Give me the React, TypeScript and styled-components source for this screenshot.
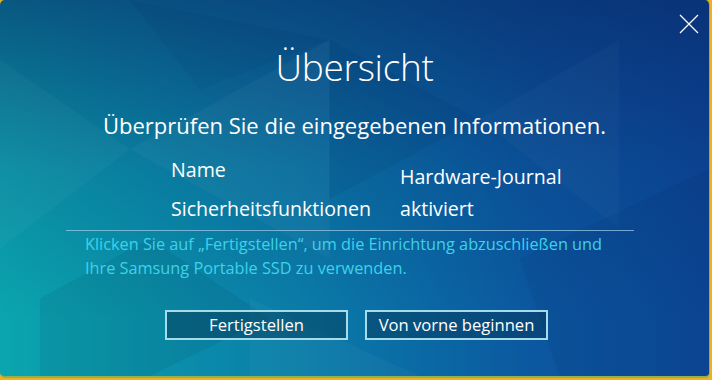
import styled, { createGlobalStyle } from "styled-components";

const GlobalStyle = createGlobalStyle`
  html, body {
    margin: 0;
    padding: 0;
    background: #f0b020;
  }
  body {
    font-family: "Open Sans", "Noto Sans", sans-serif;
  }
`;

const Pattern = () => (
  <StPattern viewBox="0 0 710 378" preserveAspectRatio="none">
    <polygon points="0,60 130,150 0,250" fill="#ffffff" opacity="0.03" />
    <polygon points="130,150 330,40 330,260" fill="#ffffff" opacity="0.035" />
    <polygon points="40,300 150,240 270,320 150,378 40,378" fill="#003040" opacity="0.09" />
    <polygon points="330,40 480,120 330,200" fill="#000830" opacity="0.05" />
    <polygon points="480,120 620,40 620,230" fill="#ffffff" opacity="0.025" />
    <polygon points="250,300 420,378 250,378" fill="#ffffff" opacity="0.03" />
    <polygon points="520,260 710,170 710,378 560,378" fill="#000830" opacity="0.05" />
    <polygon points="130,0 330,40 200,90" fill="#000830" opacity="0.04" />
  </StPattern>
);

const CloseIcon = () => (
  <svg width="20" height="20" viewBox="0 0 20 20">
    <path d="M1 1 L19 19 M19 1 L1 19" stroke="#ffffff" strokeWidth="1.2" />
  </svg>
);

export default function App() {
  return (
    <>
      <GlobalStyle />
      <StWindow>
        <Pattern />
        <StClose aria-label="Schließen">
          <CloseIcon />
        </StClose>
        <StContent>
          <StTitle>Übersicht</StTitle>
          <StSubtitle>Überprüfen Sie die eingegebenen Informationen.</StSubtitle>
          <StInfoGrid>
            <StLabel>Name</StLabel>
            <StValue $shift>Hardware-Journal</StValue>
            <StLabel>Sicherheitsfunktionen</StLabel>
            <StValue>aktiviert</StValue>
          </StInfoGrid>
          <StDivider />
          <StNote>
            Klicken Sie auf „Fertigstellen“, um die Einrichtung abzuschließen und
            <br />
            Ihre Samsung Portable SSD zu verwenden.
          </StNote>
          <StButtonRow>
            <StButton>Fertigstellen</StButton>
            <StButton>Von vorne beginnen</StButton>
          </StButtonRow>
        </StContent>
      </StWindow>
    </>
  );
}

interface StValueProps {
  $shift?: boolean;
}

const StWindow = styled.div`
  position: relative;
  width: 710px;
  height: 378px;
  box-sizing: border-box;
  border-right: 1px solid #8fb04c;
  border-bottom: 2px solid #8fb04c;
  border-radius: 5px;
  overflow: hidden;
  background:
    linear-gradient(to bottom, rgba(8, 36, 100, 0.6) 0%, rgba(8, 40, 110, 0.2) 45%, rgba(8, 40, 110, 0) 85%),
    linear-gradient(to right, #0aa6ae 0%, #0a7aa8 45%, #0b58a0 75%, #0c4898 100%);
`;

const StPattern = styled.svg`
  position: absolute;
  inset: 0;
  width: 100%;
  height: 100%;
  pointer-events: none;
`;

const StClose = styled.button`
  position: absolute;
  top: 14px;
  right: 10px;
  width: 20px;
  height: 20px;
  padding: 0;
  border: none;
  background: none;
  display: flex;
  cursor: pointer;
`;

const StContent = styled.div`
  position: relative;
  display: flex;
  flex-direction: column;
  align-items: center;
  padding-top: 42px;
  color: #ffffff;
`;

const StTitle = styled.h1`
  margin: 0;
  font-size: 37px;
  font-weight: 300;
  line-height: 50px;
  letter-spacing: -0.3px;
`;

const StSubtitle = styled.p`
  margin: 19px 0 0;
  font-size: 22px;
  font-weight: 400;
  line-height: 28px;
`;

const StInfoGrid = styled.div`
  display: grid;
  grid-template-columns: 229px 220px;
  row-gap: 6px;
  align-self: flex-start;
  margin: 18px 0 0 171px;
`;

const StLabel = styled.div`
  font-size: 19.6px;
  line-height: 26px;
`;

const StValue = styled.div<StValueProps>`
  font-size: 19.6px;
  line-height: 26px;
  margin-top: ${(props) => (props.$shift ? "7px" : "0")};
`;

const StDivider = styled.div`
  align-self: flex-start;
  margin: 8px 0 0 66px;
  width: 568px;
  height: 1px;
  background: rgba(150, 200, 230, 0.75);
`;

const StNote = styled.p`
  align-self: flex-start;
  margin: 1px 0 0 85px;
  font-size: 16.3px;
  line-height: 24px;
  color: #3ed2ea;
`;

const StButtonRow = styled.div`
  display: flex;
  gap: 17px;
  align-self: flex-start;
  margin: 30px 0 0 165px;
`;

const StButton = styled.button`
  width: 183px;
  height: 30px;
  box-sizing: border-box;
  border: 2px solid #a6dcea;
  background: rgba(4, 50, 80, 0.45);
  color: #ffffff;
  font-family: "Open Sans", "Noto Sans", sans-serif;
  font-size: 16.6px;
  line-height: 24px;
  padding: 0;
  cursor: pointer;
`;
